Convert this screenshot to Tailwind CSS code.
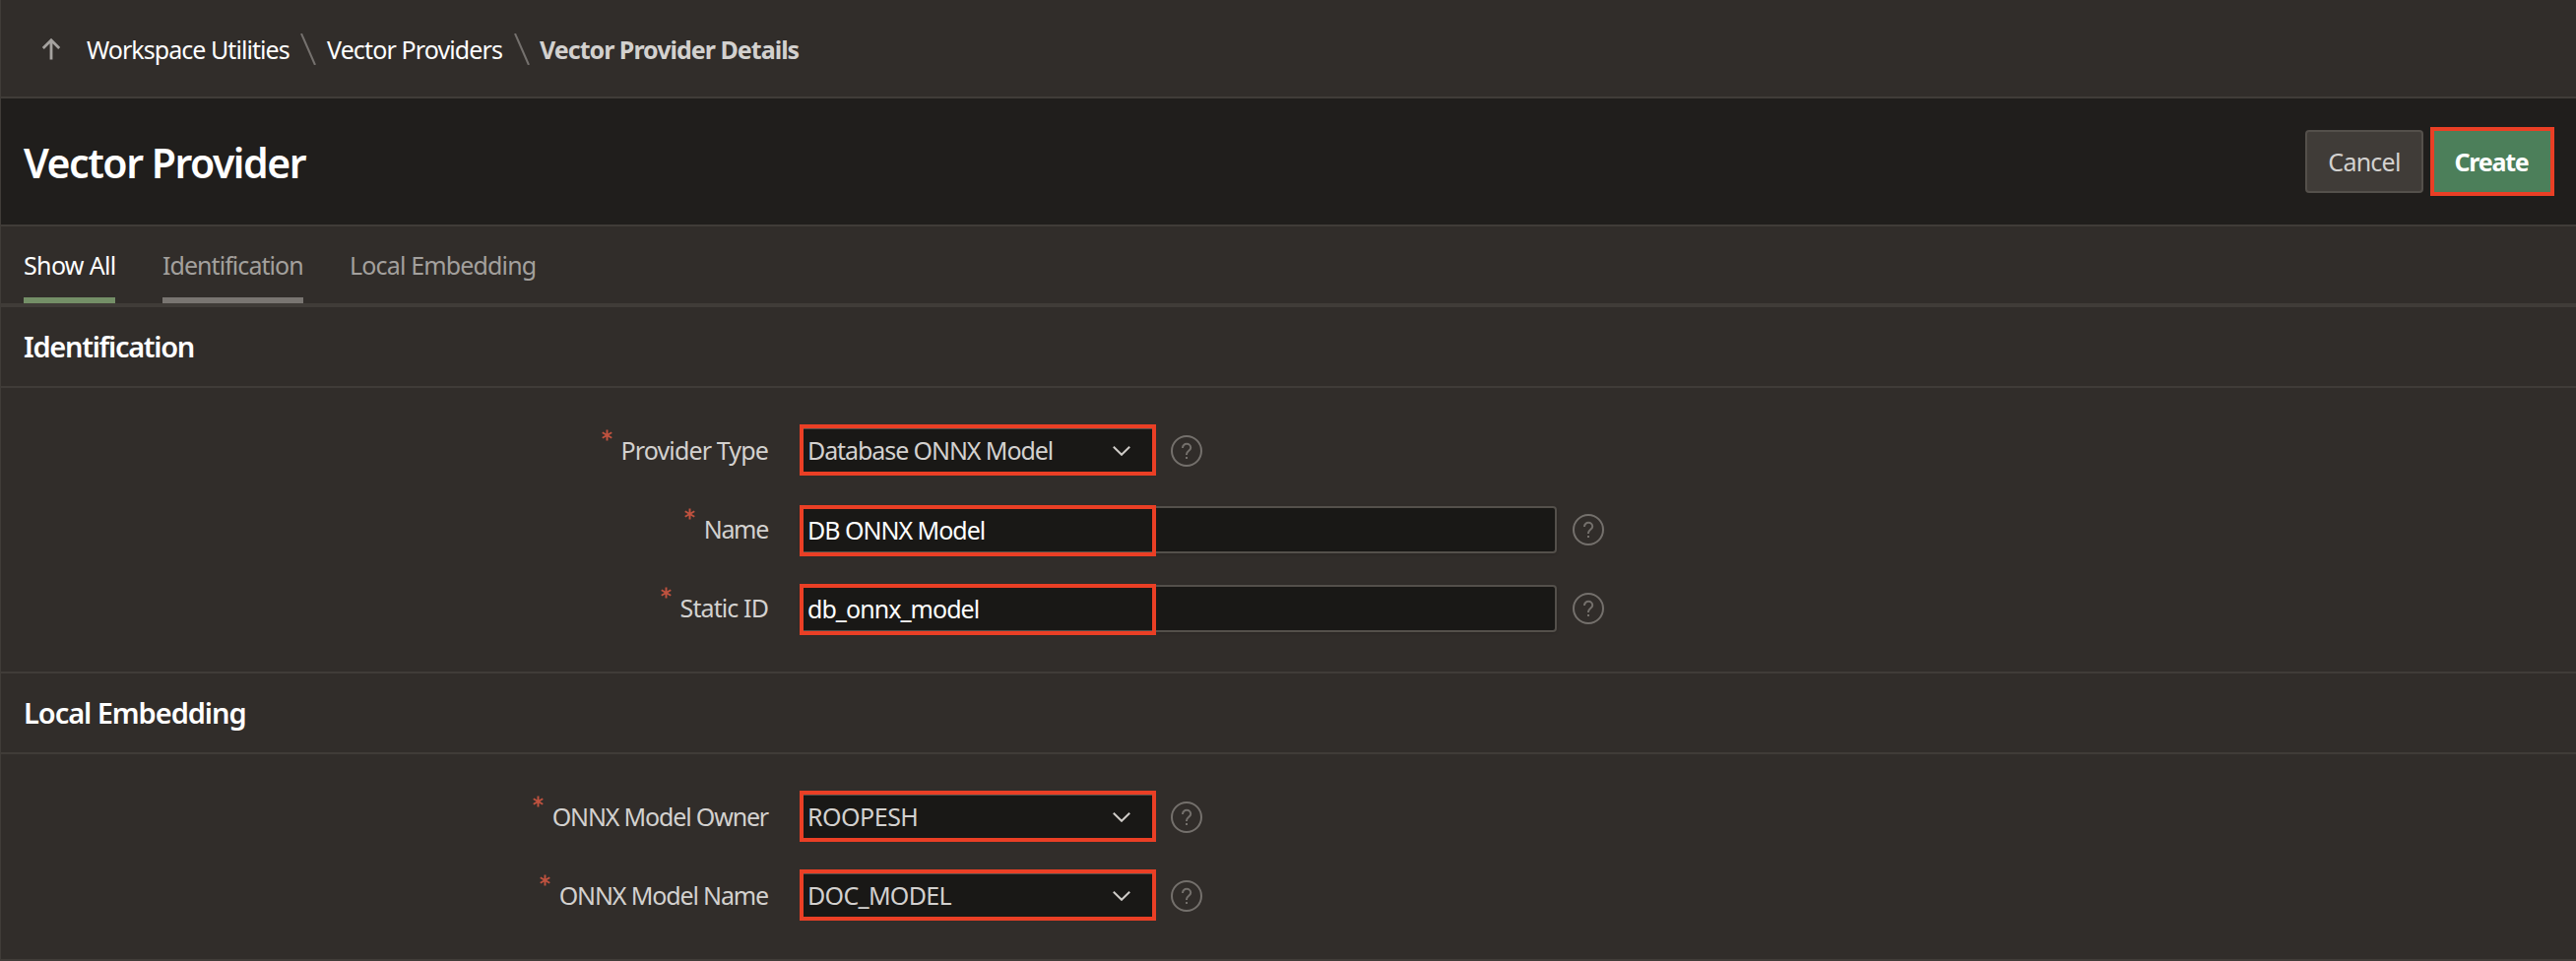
<!DOCTYPE html>
<html lang="en">
<head>
<meta charset="utf-8">
<title>Vector Provider Details</title>
<script src="https://cdn.jsdelivr.net/npm/@tailwindcss/browser@4"></script>
</head>
<body class="bg-[#312d2a]">
<svg class="hidden">
  <symbol id="star" viewBox="0 0 12 12"><path d="M6 0V12M0.8 3L11.2 9M11.2 3L0.8 9" fill="none" stroke="#c0523f" stroke-width="2.1"/></symbol>
  <symbol id="help" viewBox="0 0 32 32"><g fill="none" stroke="#74706c" stroke-width="2"><circle cx="16" cy="16" r="15"/><path d="M12 13V12.7a4.1 3.9 0 0 1 8.2 0c0 3-4.2 3-4.2 6.6V20"/></g><rect x="15" y="22" width="2" height="2" fill="#74706c"/></symbol>
  <symbol id="chev" viewBox="0 0 18 10"><path d="M0.8 0.8L9 8.8L17.2 0.8" fill="none" stroke="#cfccc8" stroke-width="2"/></symbol>
</svg>
<div class="flex h-[976px] w-[2616px] flex-col overflow-hidden border-l border-[#403c38] bg-[#312d2a] font-['Noto_Sans','Open_Sans',sans-serif] text-[25px] leading-none whitespace-nowrap text-white">

  <nav class="flex h-[100px] shrink-0 items-center border-b-2 border-[#403c38] pt-[2px] pl-[41px]">
    <svg class="h-[22px] w-5" viewBox="0 0 20 22" fill="none" stroke="#a5a29f" stroke-width="2.8"><path d="M10 21.5V2.5M1.8 10L10 1.8L18.2 10"/></svg>
    <a class="ml-[26px] w-[206px] tracking-[-0.95px]">Workspace Utilities</a>
    <svg class="ml-[11px] h-8 w-4" viewBox="0 0 16 32" fill="none" stroke="#75716e" stroke-width="2"><path d="M1 0L15 32"/></svg>
    <a class="ml-[11px] w-[178px] tracking-[-0.87px]">Vector Providers</a>
    <svg class="ml-3 h-8 w-4" viewBox="0 0 16 32" fill="none" stroke="#75716e" stroke-width="2"><path d="M1 0L15 32"/></svg>
    <span class="ml-[10px] font-bold tracking-[-0.98px] text-[#d3d1cf]">Vector Provider Details</span>
  </nav>

  <header class="flex h-[130px] shrink-0 items-center justify-between border-b-2 border-[#403c38] bg-[#201e1c] pr-[22px] pl-[23px]">
    <h1 class="pt-[2px] text-[41px] font-semibold tracking-[-1.48px]">Vector Provider</h1>
    <div class="flex items-center gap-[7px]">
      <button class="flex h-16 w-[120px] items-center justify-center rounded border-2 border-[#54504b] bg-[#403c38] tracking-[-0.75px] text-[#d3d1cf]">Cancel</button>
      <button class="flex h-[70px] w-[126px] items-center justify-center border-4 border-[#ea3f25] bg-[#4c7f5a] pr-[2px] font-bold tracking-[-1.245px]">Create</button>
    </div>
  </header>

  <div class="flex h-[82px] shrink-0 gap-12 border-b-4 border-[#403c38] pl-[23px] text-[#a3a09d]">
    <a class="flex w-[93px] items-center border-b-[6px] border-[#748f67] pt-[6px] tracking-[-0.65px] text-white">Show All</a>
    <a class="flex w-[143px] items-center border-b-[6px] border-[#797571] pt-[6px] tracking-[-0.95px]">Identification</a>
    <a class="-ml-px flex items-center tracking-[-0.84px]">Local Embedding</a>
  </div>

  <section class="flex h-[372px] shrink-0 flex-col border-b-2 border-[#403c38]">
    <h2 class="flex h-[82px] items-center border-b-2 border-[#403c38] pb-[2px] pl-[23px] text-[29px] font-semibold tracking-[-1.3px]">Identification</h2>
    <div class="flex flex-col gap-8 pt-10">
      <div class="flex h-12 items-center">
        <label class="flex h-12 w-[779px] justify-end gap-[9px] text-[#d3d1cf]"><svg class="mt-[2px] h-3 w-[11px]"><use href="#star"/></svg><span class="leading-[47px] tracking-[-0.86px]">Provider Type</span></label>
        <div class="relative ml-8 flex h-12 w-[361px] items-center justify-between border-2 border-[#54504b] bg-[#191816] pr-[23px] pl-[6px] text-[#d3d1cf]"><span class="pb-px tracking-[-1.08px]">Database ONNX Model</span><svg class="h-[10px] w-[18px]"><use href="#chev"/></svg><i class="absolute -top-[5px] -left-[2px] h-[52px] w-[362px] border-4 border-[#ea3f25]"></i></div>
        <svg class="ml-4 h-8 w-8"><use href="#help"/></svg>
      </div>
      <div class="flex h-12 items-center">
        <label class="flex h-12 w-[779px] justify-end gap-[9px] text-[#d3d1cf]"><svg class="mt-[2px] h-3 w-[11px]"><use href="#star"/></svg><span class="leading-[47px] tracking-[-1.3px]">Name</span></label>
        <div class="relative ml-8 flex h-12 w-[769px] items-center rounded border-2 border-[#54504b] bg-[#191816] pl-[6px] shadow-sm"><span class="tracking-[-1.015px]">DB ONNX Model</span><i class="absolute -top-[3px] -left-[2px] h-[52px] w-[362px] border-4 border-[#ea3f25]"></i></div>
        <svg class="ml-4 h-8 w-8"><use href="#help"/></svg>
      </div>
      <div class="flex h-12 items-center">
        <label class="flex h-12 w-[779px] justify-end gap-[9px] text-[#d3d1cf]"><svg class="mt-[2px] h-3 w-[11px]"><use href="#star"/></svg><span class="leading-[47px] tracking-[-0.9px]">Static ID</span></label>
        <div class="relative ml-8 flex h-12 w-[769px] items-center rounded border-2 border-[#54504b] bg-[#191816] pl-[6px] shadow-sm"><span class="pt-px tracking-[-0.954px]">db_onnx_model</span><i class="absolute -top-[3px] -left-[2px] h-[52px] w-[362px] border-4 border-[#ea3f25]"></i></div>
        <svg class="ml-4 h-8 w-8"><use href="#help"/></svg>
      </div>
    </div>
  </section>

  <section class="flex h-[292px] shrink-0 flex-col border-b-2 border-[#403c38]">
    <h2 class="flex h-[82px] items-center border-b-2 border-[#403c38] pb-[2px] pl-[23px] text-[29px] font-semibold tracking-[-1.05px]">Local Embedding</h2>
    <div class="flex flex-col gap-8 pt-10">
      <div class="flex h-12 items-center">
        <label class="flex h-12 w-[779px] justify-end gap-[9px] text-[#d3d1cf]"><svg class="mt-[2px] h-3 w-[11px]"><use href="#star"/></svg><span class="leading-[47px] tracking-[-1.17px]">ONNX Model Owner</span></label>
        <div class="relative ml-8 flex h-12 w-[361px] items-center justify-between border-2 border-[#54504b] bg-[#191816] pr-[23px] pl-[6px] text-[#d3d1cf]"><span class="pb-px tracking-[-0.5px]">ROOPESH</span><svg class="h-[10px] w-[18px]"><use href="#chev"/></svg><i class="absolute -top-[5px] -left-[2px] h-[52px] w-[362px] border-4 border-[#ea3f25]"></i></div>
        <svg class="ml-4 h-8 w-8"><use href="#help"/></svg>
      </div>
      <div class="flex h-12 items-center">
        <label class="flex h-12 w-[779px] justify-end gap-[9px] text-[#d3d1cf]"><svg class="mt-[2px] h-3 w-[11px]"><use href="#star"/></svg><span class="leading-[47px] tracking-[-1.14px]">ONNX Model Name</span></label>
        <div class="relative ml-8 flex h-12 w-[361px] items-center justify-between border-2 border-[#54504b] bg-[#191816] pr-[23px] pl-[6px] text-[#d3d1cf]"><span class="pb-px tracking-[-0.7px]">DOC_MODEL</span><svg class="h-[10px] w-[18px]"><use href="#chev"/></svg><i class="absolute -top-[5px] -left-[2px] h-[52px] w-[362px] border-4 border-[#ea3f25]"></i></div>
        <svg class="ml-4 h-8 w-8"><use href="#help"/></svg>
      </div>
    </div>
  </section>
</div>
</body>
</html>
